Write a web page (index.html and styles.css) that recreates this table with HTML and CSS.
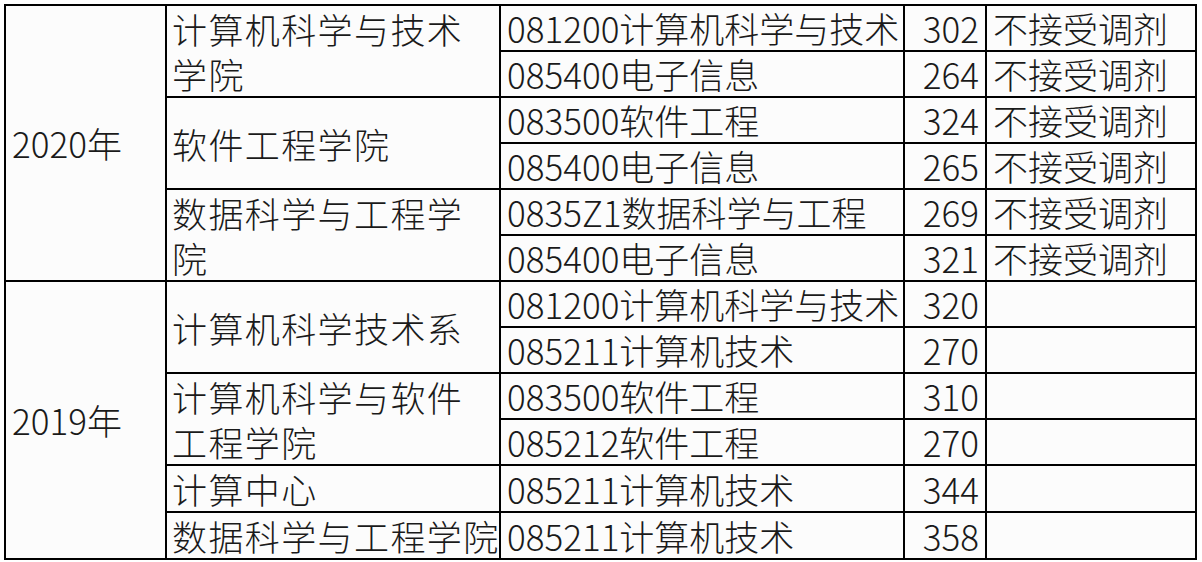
FILE: index.html
```html
<!DOCTYPE html>
<html lang="zh">
<head>
<meta charset="utf-8">
<link rel="stylesheet" href="styles.css">
</head>
<body>
<table class="sheet">
<colgroup>
<col class="c1"><col class="c2"><col class="c3"><col class="c4"><col class="c5">
</colgroup>
<tbody>
<tr><td class="year" rowspan="6">2020年</td><td class="school" rowspan="2">计算机科学与技术<br>学院</td><td>081200计算机科学与技术</td><td class="num">302</td><td>不接受调剂</td></tr>
<tr><td>085400电子信息</td><td class="num">264</td><td>不接受调剂</td></tr>
<tr><td class="school" rowspan="2">软件工程学院</td><td>083500软件工程</td><td class="num">324</td><td>不接受调剂</td></tr>
<tr><td>085400电子信息</td><td class="num">265</td><td>不接受调剂</td></tr>
<tr><td class="school" rowspan="2">数据科学与工程学<br>院</td><td>0835Z1数据科学与工程</td><td class="num">269</td><td>不接受调剂</td></tr>
<tr><td>085400电子信息</td><td class="num">321</td><td>不接受调剂</td></tr>
<tr><td class="year" rowspan="6">2019年</td><td class="school" rowspan="2">计算机科学技术系</td><td>081200计算机科学与技术</td><td class="num">320</td><td></td></tr>
<tr><td>085211计算机技术</td><td class="num">270</td><td></td></tr>
<tr><td class="school" rowspan="2">计算机科学与软件<br>工程学院</td><td>083500软件工程</td><td class="num">310</td><td></td></tr>
<tr><td>085212软件工程</td><td class="num">270</td><td></td></tr>
<tr><td class="school">计算中心</td><td>085211计算机技术</td><td class="num">344</td><td></td></tr>
<tr><td class="school">数据科学与工程学院</td><td>085211计算机技术</td><td class="num">358</td><td></td></tr>
</tbody>
</table>
</body>
</html>
```

FILE: styles.css
```css
html, body {
  margin: 0;
  padding: 0;
  background: #ffffff;
}
body {
  padding: 4px 0 0 4px;
  font-family: "Noto Sans CJK SC", "Noto Sans", sans-serif;
  color: #1a1a1a;
}
.sheet {
  border-collapse: collapse;
  table-layout: fixed;
  width: 1192px;
  background: #fcfcfc;
}
.c1 { width: 161px; }
.c2 { width: 334px; }
.c3 { width: 404px; }
.c4 { width: 82px; }
.c5 { width: 210px; }
.sheet tr {
  height: 46px;
}
.sheet td {
  border: 2px solid #000;
  padding: 0 6px;
  font-size: 35px;
  line-height: 44px;
  font-weight: 300;
  white-space: nowrap;
  vertical-align: middle;
}
.sheet td.num {
  text-align: right;
}
.sheet td.year {
  padding-left: 6px;
}
.sheet td.school {
  padding-left: 5px;
  letter-spacing: 1.4px;
  line-height: 45px;
}
```
